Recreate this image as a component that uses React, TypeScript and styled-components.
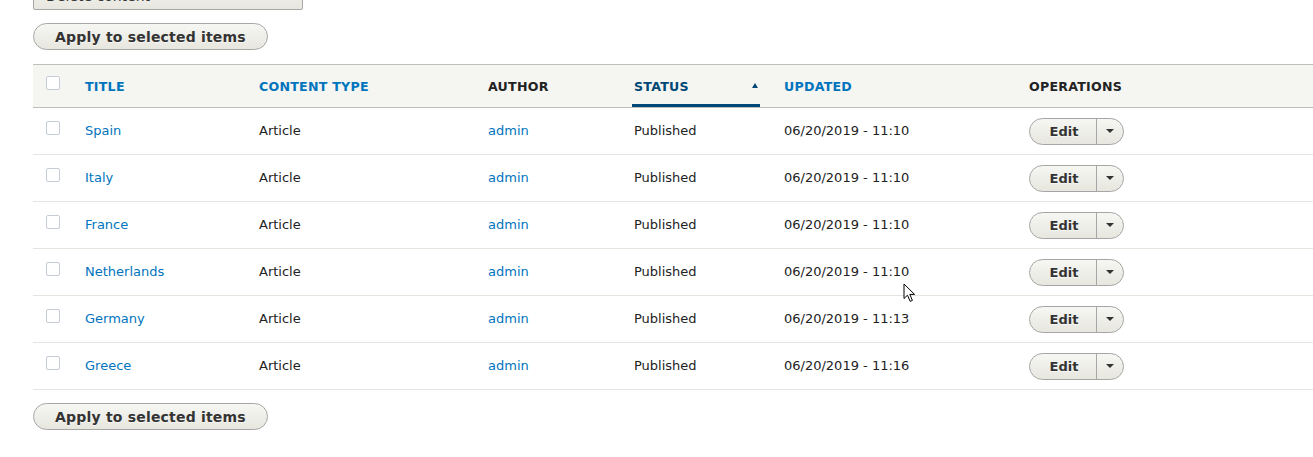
import React from 'react';
import styled, { createGlobalStyle, css } from 'styled-components';

const GlobalStyle = createGlobalStyle`
  html, body {
    margin: 0;
    padding: 0;
    background: #fff;
    overflow: hidden;
  }
  body {
    font-family: "DejaVu Sans", "Liberation Sans", sans-serif;
    font-size: 13px;
    color: #222;
  }
`;

const Page = styled.div`
  position: relative;
  padding-left: 33px;
  margin-top: -19px;
`;

const ActionSelect = styled.div`
  box-sizing: border-box;
  width: 270px;
  height: 29px;
  display: flex;
  align-items: center;
  justify-content: space-between;
  padding: 0 10px 0 12px;
  border: 1px solid #a6a6a6;
  border-radius: 2px;
  background: linear-gradient(to bottom, #f6f6f3, #e7e7df);
  color: #333;
  font-size: 14px;
`;

const SelectArrow = styled.span`
  width: 0;
  height: 0;
  border-left: 3px solid transparent;
  border-right: 3px solid transparent;
  border-top: 4px solid #333;
`;

const Button = styled.button`
  display: block;
  box-sizing: border-box;
  height: 27px;
  margin: 13px 0 14px;
  padding: 0 21px;
  border: 1px solid #a6a6a6;
  border-radius: 20em;
  background: linear-gradient(to bottom, #f6f6f3, #e7e7df);
  color: #333;
  font-family: inherit;
  font-size: 14px;
  font-weight: bold;
  letter-spacing: 0.2px;
  text-shadow: 0 1px rgba(255, 255, 255, 0.6);
  cursor: pointer;
`;

const Table = styled.table`
  width: calc(100% + 40px);
  border-collapse: collapse;
  table-layout: fixed;
`;

const HeadRow = styled.tr`
  background: #f5f5f2;
  border-top: 1px solid #bfbfba;
  border-bottom: 1px solid #bfbfba;
`;

const Th = styled.th<{ $padLeft?: number }>`
  height: 42px;
  padding: 0 12px 0 ${p => p.$padLeft ?? 12}px;
  text-align: left;
  vertical-align: middle;
  font-size: 12.6px;
  font-weight: bold;
  letter-spacing: 0.25px;
  text-transform: uppercase;
  color: #222;
  white-space: nowrap;
`;

const SortLink = styled.a<{ $active?: boolean }>`
  color: #0074bd;
  text-decoration: none;
  ${p =>
    p.$active &&
    css`
      box-sizing: border-box;
      display: flex;
      align-items: center;
      justify-content: space-between;
      height: 42px;
      padding: 4px 2px 0;
      border-bottom: 3px solid #004875;
      color: #004875;
    `}
`;

const SortIcon = styled.span`
  width: 0;
  height: 0;
  border-left: 3px solid transparent;
  border-right: 3px solid transparent;
  border-bottom: 5px solid #004875;
  margin-bottom: 2px;
`;

const Row = styled.tr`
  border-bottom: 1px solid #e6e4df;
`;

const Td = styled.td`
  height: 44px;
  padding: 0 12px 2px;
  vertical-align: middle;
  font-size: 13px;
  color: #222;
  white-space: nowrap;
`;

const CheckCell = styled(Td)`
  padding-left: 13px;
`;

const CheckTh = styled(Th)`
  padding-left: 13px;
`;

const Checkbox = styled.span<{ $lift: number }>`
  display: block;
  box-sizing: border-box;
  width: 14px;
  height: 14px;
  margin-bottom: ${p => p.$lift}px;
  border: 1px solid #c5ccd8;
  border-radius: 2px;
  background: #fff;
`;

const TextLink = styled.a`
  color: #0074bd;
  text-decoration: none;
`;

const DropButton = styled.div`
  display: inline-flex;
  box-sizing: border-box;
  height: 27px;
  margin-top: 2px;
  border: 1px solid #a6a6a6;
  border-radius: 20em;
  background: linear-gradient(to bottom, #f6f6f3, #e7e7df);
  overflow: hidden;
`;

const DropMain = styled.span`
  box-sizing: border-box;
  width: 67px;
  display: flex;
  align-items: center;
  justify-content: center;
  padding-left: 2px;
  border-right: 1px solid #a6a6a6;
  font-size: 13px;
  font-weight: bold;
  color: #333;
  text-shadow: 0 1px rgba(255, 255, 255, 0.6);
`;

const DropToggle = styled.span`
  width: 26px;
  display: flex;
  align-items: center;
  justify-content: center;

  &::after {
    content: '';
    width: 0;
    height: 0;
    border-left: 4px solid transparent;
    border-right: 4px solid transparent;
    border-top: 4px solid #333;
  }
`;

const Pointer = styled.svg`
  position: absolute;
  left: 903px;
  top: 302px;
  pointer-events: none;
`;

const columns = [40, 174, 229, 146, 150, 245, 336];

const rows = [
  { title: 'Spain', time: '11:10' },
  { title: 'Italy', time: '11:10' },
  { title: 'France', time: '11:10' },
  { title: 'Netherlands', time: '11:10' },
  { title: 'Germany', time: '11:13' },
  { title: 'Greece', time: '11:16' },
];

const App = () => {
  return (
    <>
      <GlobalStyle />
      <Page>
        <ActionSelect>
          <span>Delete content</span>
          <SelectArrow />
        </ActionSelect>
        <Button>Apply to selected items</Button>

        <Table>
          <colgroup>
            {columns.map((w, i) => (
              <col key={i} style={{ width: w }} />
            ))}
          </colgroup>
          <thead>
            <HeadRow>
              <CheckTh>
                <Checkbox $lift={6} />
              </CheckTh>
              <Th>
                <SortLink href="#">Title</SortLink>
              </Th>
              <Th>
                <SortLink href="#">Content type</SortLink>
              </Th>
              <Th>Author</Th>
              <Th $padLeft={10}>
                <SortLink href="#" $active>
                  Status
                  <SortIcon />
                </SortLink>
              </Th>
              <Th>
                <SortLink href="#">Updated</SortLink>
              </Th>
              <Th>Operations</Th>
            </HeadRow>
          </thead>
          <tbody>
            {rows.map(r => (
              <Row key={r.title}>
                <CheckCell>
                  <Checkbox $lift={4} />
                </CheckCell>
                <Td>
                  <TextLink href="#">{r.title}</TextLink>
                </Td>
                <Td>Article</Td>
                <Td>
                  <TextLink href="#">admin</TextLink>
                </Td>
                <Td>Published</Td>
                <Td>06/20/2019 - {r.time}</Td>
                <Td>
                  <DropButton>
                    <DropMain>Edit</DropMain>
                    <DropToggle />
                  </DropButton>
                </Td>
              </Row>
            ))}
          </tbody>
        </Table>

        <Button>Apply to selected items</Button>

        <Pointer width="14" height="20" viewBox="0 0 14 20">
          <path
            d="M1 1 L1 15.5 L4.5 12.2 L7.2 18.4 L9.4 17.4 L6.8 11.4 L11.6 11.4 Z"
            fill="#fff"
            stroke="#000"
            strokeWidth="1"
            strokeLinejoin="round"
          />
        </Pointer>
      </Page>
    </>
  );
};

export default App;
